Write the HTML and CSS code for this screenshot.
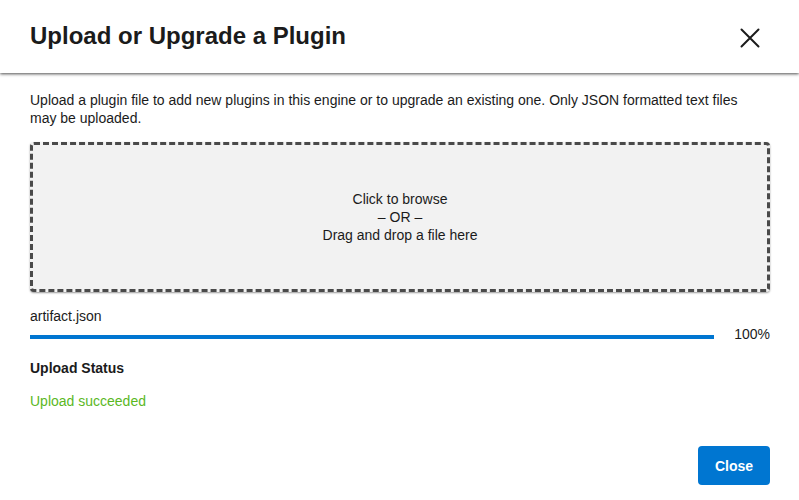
FILE: index.html
```html
<!DOCTYPE html>
<html lang="en">
<head>
  <meta charset="utf-8">
  <title>Upload or Upgrade a Plugin</title>
  <link rel="stylesheet" href="styles.css">
</head>
<body>
  <div class="dialog" role="dialog" aria-labelledby="dialog-title">
    <header class="dialog-header">
      <h1 class="dialog-title" id="dialog-title">Upload or Upgrade a Plugin</h1>
      <button class="icon-button" type="button" aria-label="Close dialog">
        <svg class="icon" viewBox="0 0 20 20" aria-hidden="true"><path d="M1.5 1.5 18.5 18.5M18.5 1.5 1.5 18.5"/></svg>
      </button>
    </header>
    <main class="dialog-body">
      <p class="intro">Upload a plugin file to add new plugins in this engine or to upgrade an existing one. Only JSON formatted text files may be uploaded.</p>
      <button class="dropzone" type="button">Click to browse<br>– OR –<br>Drag and drop a file here</button>
      <label class="file-name" for="upload-progress">artifact.json</label>
      <div class="progress-row">
        <progress class="progress" id="upload-progress" max="100" value="100"></progress>
        <span class="percent">100%</span>
      </div>
      <h2 class="status-title">Upload Status</h2>
      <p class="status-message">Upload succeeded</p>
    </main>
    <footer class="dialog-footer">
      <button class="primary-button" type="button">Close</button>
    </footer>
  </div>
</body>
</html>
```
FILE: styles.css
```css
* {
  box-sizing: border-box;
}

body,
h1,
h2,
p {
  margin: 0;
}

body,
button {
  font-family: "Liberation Sans", Arial, sans-serif;
  font-size: 14px;
  line-height: 18px;
  color: #1b1b1b;
}

body {
  background: #fff;
}

button {
  border: 0;
  cursor: pointer;
}

.dialog {
  display: flex;
  flex-direction: column;
  min-height: 100vh;
}

.dialog-header {
  display: flex;
  align-items: center;
  justify-content: space-between;
  padding: 20px 39px 21px 30px;
  box-shadow: 0 1px 3px rgba(0, 0, 0, 0.7);
}

.dialog-title {
  font-size: 24px;
  line-height: 32px;
}

.icon-button {
  display: flex;
  padding: 0;
  margin-top: 4px;
  background: none;
}

.icon {
  width: 20px;
  height: 20px;
  fill: none;
  stroke: #1b1b1b;
  stroke-width: 2;
  stroke-linecap: round;
}

.dialog-body {
  display: flex;
  flex: 1;
  flex-direction: column;
  padding: 18px 29px 0 30px;
}

.intro {
  padding-right: 16px;
}

.dropzone {
  min-height: 150px;
  margin: 15px 0;
  border: 3px dashed #4a4a4a;
  border-radius: 4px;
  background: #f2f2f2;
  box-shadow: 0 1px 2px rgba(0, 0, 0, 0.4);
}

.progress-row {
  display: flex;
  align-items: center;
  gap: 20px;
}

.progress {
  flex: 1;
  min-width: 0;
  height: 4px;
  margin-top: 5px;
  border: 0;
  appearance: none;
  background: #e0e0e0;
}

.progress::-webkit-progress-bar {
  background: #e0e0e0;
}

.progress::-webkit-progress-value {
  background: #0076d1;
}

.progress::-moz-progress-bar {
  background: #0076d1;
}

.status-title {
  margin: 16px 0 15px;
  font-size: 14px;
  line-height: 18px;
}

.status-message {
  color: #5bb81f;
}

.dialog-footer {
  display: flex;
  justify-content: flex-end;
  padding: 15px 29px;
}

.primary-button {
  min-height: 39px;
  padding: 0 17px;
  border-radius: 4px;
  background: #0076d1;
  color: #fff;
  font-weight: bold;
}
```
